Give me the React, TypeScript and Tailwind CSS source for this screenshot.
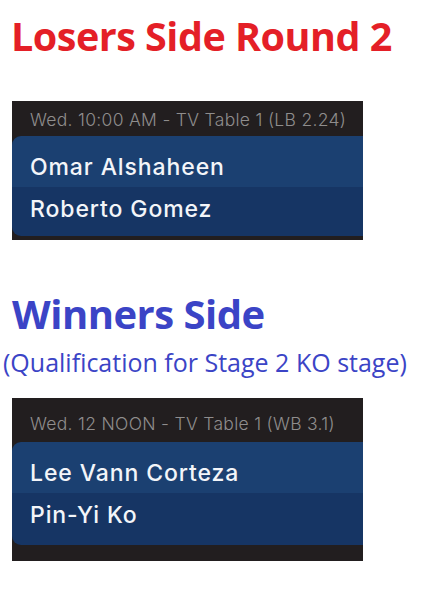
import React from "react";

type CardProps = {
  header: string;
  names: [string, string];
  headerClass: string;
  row2Class: string;
  bottomClass: string;
};

function Card({ header, names, headerClass, row2Class, bottomClass }: CardProps) {
  return (
    <div className={`w-[351px] ml-[12px] bg-[#221e1f] ${bottomClass}`}>
      <div
        className={`pl-[18px] text-[17.5px] leading-[20px] tracking-[0.3px] font-light text-[#8f8d8d] whitespace-nowrap font-['Inter',sans-serif] ${headerClass}`}
      >
        {header}
      </div>
      <div className="rounded-l-[9px] overflow-hidden font-['Inter',sans-serif] text-[23px] font-medium tracking-[0.9px] text-[#f3f5f9] whitespace-nowrap">
        <div className="h-[51px] pt-[10px] leading-[42px] pl-[18px] bg-[#1b4071]">{names[0]}</div>
        <div className={`pl-[18px] bg-[#163564] ${row2Class}`}>{names[1]}</div>
      </div>
    </div>
  );
}

export default function App() {
  return (
    <div className="w-[427px] h-[595px] bg-white flex flex-col">
      <div className="pt-[14px] pl-[11px] h-[58px] text-[39.5px] leading-[44px] font-bold tracking-[-0.5px] text-[#e41f27] font-['Open_Sans',sans-serif] whitespace-nowrap">
        Losers Side Round 2
      </div>
      <div className="mt-[43px]">
        <Card
          header="Wed. 10:00 AM - TV Table 1 (LB 2.24)"
          names={["Omar Alshaheen", "Roberto Gomez"]}
          headerClass="h-[35px] pt-[9px]"
          row2Class="h-[49px] leading-[44px]"
          bottomClass="pb-[4px]"
        />
      </div>
      <div className="mt-[52px] pl-[12px] text-[40px] leading-[44px] font-bold tracking-[-0.5px] text-[#3b44c6] font-['Open_Sans',sans-serif] whitespace-nowrap">
        Winners Side
      </div>
      <div className="mt-[9px] pl-[3px] text-[25px] leading-[34px] text-[#3b44c6] font-['Open_Sans',sans-serif] whitespace-nowrap">
        (Qualification for Stage 2 KO stage)
      </div>
      <div className="mt-[19px]">
        <Card
          header="Wed. 12 NOON - TV Table 1 (WB 3.1)"
          names={["Lee Vann Corteza", "Pin-Yi Ko"]}
          headerClass="h-[44px] pt-[16px]"
          row2Class="h-[52px] leading-[44px]"
          bottomClass="pb-[16px]"
        />
      </div>
    </div>
  );
}
